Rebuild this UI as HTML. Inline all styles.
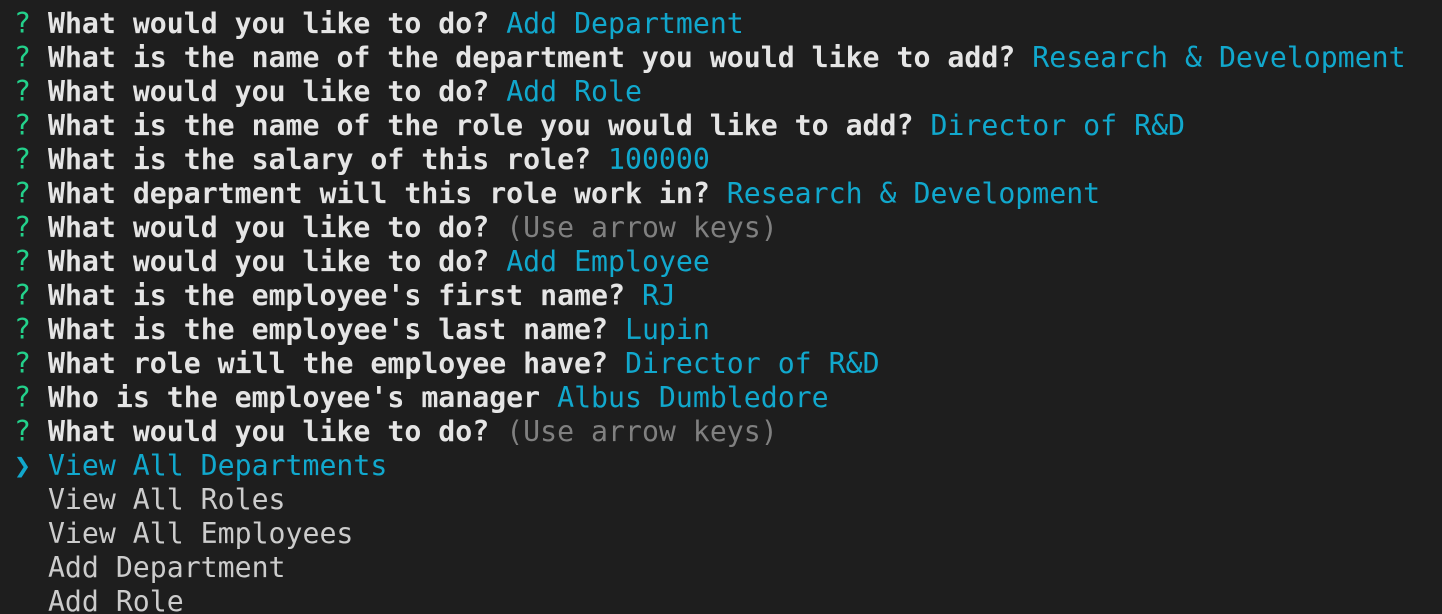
<!DOCTYPE html>
<html><head><style>
html,body{margin:0;background:#1e1e1e;width:1442px;height:614px;overflow:hidden}
pre{margin:0;padding:7px 0 0 14px;font-family:"DejaVu Sans Mono","Liberation Mono",monospace;font-size:28.2px;line-height:34px;color:#cccccc;letter-spacing:0}
.g{color:#23d18b}.b{font-weight:bold;color:#e5e5e5}.c{color:#11a8cd}.d{color:#808080}
</style></head><body><pre><span class="g">?</span> <span class="b">What would you like to do?</span> <span class="c">Add Department</span>
<span class="g">?</span> <span class="b">What is the name of the department you would like to add?</span> <span class="c">Research &amp; Development</span>
<span class="g">?</span> <span class="b">What would you like to do?</span> <span class="c">Add Role</span>
<span class="g">?</span> <span class="b">What is the name of the role you would like to add?</span> <span class="c">Director of R&amp;D</span>
<span class="g">?</span> <span class="b">What is the salary of this role?</span> <span class="c">100000</span>
<span class="g">?</span> <span class="b">What department will this role work in?</span> <span class="c">Research &amp; Development</span>
<span class="g">?</span> <span class="b">What would you like to do?</span> <span class="d">(Use arrow keys)</span>
<span class="g">?</span> <span class="b">What would you like to do?</span> <span class="c">Add Employee</span>
<span class="g">?</span> <span class="b">What is the employee's first name?</span> <span class="c">RJ</span>
<span class="g">?</span> <span class="b">What is the employee's last name?</span> <span class="c">Lupin</span>
<span class="g">?</span> <span class="b">What role will the employee have?</span> <span class="c">Director of R&amp;D</span>
<span class="g">?</span> <span class="b">Who is the employee's manager</span> <span class="c">Albus Dumbledore</span>
<span class="g">?</span> <span class="b">What would you like to do?</span> <span class="d">(Use arrow keys)</span>
<span class="c">❯ View All Departments</span>
  View All Roles
  View All Employees
  Add Department
  Add Role</pre></body></html>
